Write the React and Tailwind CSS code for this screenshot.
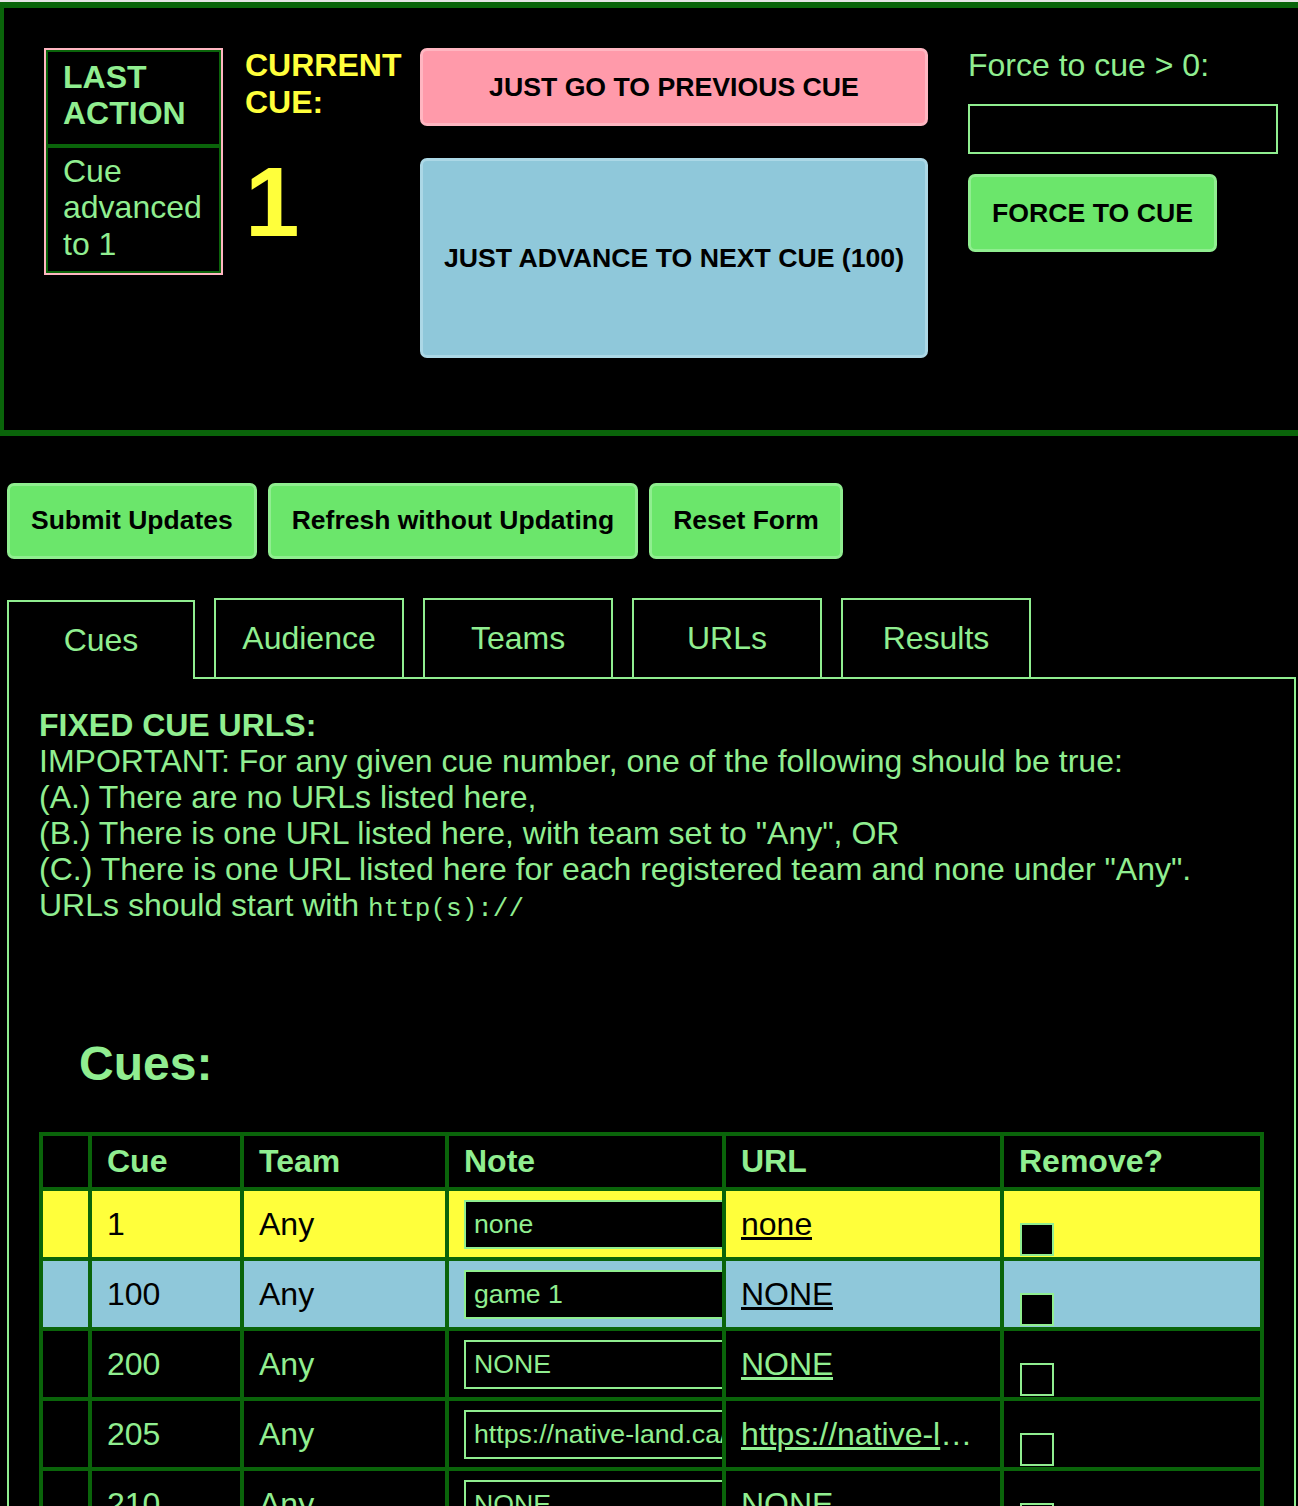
import React from "react";
import clsx from "clsx";

const tabs = ["Cues", "Audience", "Teams", "URLs", "Results"];

const cues = [
  { id: 1, cue: "1", team: "Any", note: "none", url: "none", tone: "current" },
  { id: 2, cue: "100", team: "Any", note: "game 1", url: "NONE", tone: "next" },
  { id: 3, cue: "200", team: "Any", note: "NONE", url: "NONE" },
  { id: 4, cue: "205", team: "Any", note: "https://native-land.ca/", url: "https://native-land.ca/" },
  { id: 5, cue: "210", team: "Any", note: "NONE", url: "NONE" },
  { id: 6, cue: "220", team: "Any", note: "NONE", url: "NONE" },
];

const rules = [
  "IMPORTANT: For any given cue number, one of the following should be true:",
  "(A.) There are no URLs listed here,",
  '(B.) There is one URL listed here, with team set to "Any", OR',
  '(C.) There is one URL listed here for each registered team and none under "Any".',
];

const cell = "border-r-4 border-b-4 border-[#0a640a]";

function GreenButton({ children, className }) {
  return (
    <button
      className={clsx(
        "h-[76px] px-[21px] rounded-[7px] border-[3px] border-[#90ee90] bg-[#6be66b] font-bold text-[26.5px] text-black whitespace-nowrap",
        className
      )}
    >
      {children}
    </button>
  );
}

function ControlPanel() {
  return (
    <div className="-ml-[2px] h-[434px] border-[6px] border-r-0 border-[#0a640a] flex pt-[40px] pl-[40px]">
      {/* Last action */}
      <div className="w-[179px] self-start border-2 border-[#ffb6c1] text-[32px] leading-[1.15] text-[#90ee90]">
        <div className="border-2 border-[#0a640a] pt-[6.5px] pb-[12px] px-[15px] font-bold">LAST ACTION</div>
        <div className="border-2 border-[#0a640a] pt-[4.5px] pb-[8px] px-[15px]">Cue advanced to 1</div>
      </div>

      {/* Current cue */}
      <div className="w-[175px] ml-[22px] -mt-[1px] text-[#ffff3b] font-bold">
        <div className="text-[32px] leading-[1.15]">CURRENT CUE:</div>
        <div className="text-[98px] leading-none mt-[32px]">1</div>
      </div>

      {/* Cue buttons */}
      <div className="w-[508px] flex flex-col">
        <button className="h-[78px] rounded-[7px] border-[3px] border-[#ffb6c1] bg-[#ff9aaa] font-bold text-[26.67px] text-black">
          JUST GO TO PREVIOUS CUE
        </button>
        <button className="h-[200px] mt-[32px] rounded-[7px] border-[3px] border-[#acd8e6] bg-[#8fc8da] font-bold text-[26.67px] text-black">
          JUST ADVANCE TO NEXT CUE (100)
        </button>
      </div>

      {/* Force */}
      <div className="ml-[40px] flex flex-col items-start">
        <div className="-mt-[1px] text-[32px] leading-[1.15] text-[#90ee90]">Force to cue &gt; 0:</div>
        <input className="mt-[20px] w-[310px] h-[50px] border-2 border-[#90ee90] bg-black" />
        <GreenButton className="h-[78px] mt-[20px] text-[26.67px]">FORCE TO CUE</GreenButton>
      </div>
    </div>
  );
}

function CueTable() {
  return (
    <div className="mt-[41px] w-[1225px] grid grid-cols-[49px_152px_205px_277px_278px_260px] border-l-4 border-t-4 border-[#0a640a] text-[32px] leading-[1.15]">
      {["", "Cue", "Team", "Note", "URL", "Remove?"].map((h, i) => (
        <div key={i} className={clsx(cell, "h-[55px] flex items-center pl-[15px] font-bold text-[#90ee90]")}>
          {h}
        </div>
      ))}
      {cues.map((row) => {
        const bg =
          row.tone === "current" ? "bg-[#ffff3b] text-black" :
          row.tone === "next" ? "bg-[#8fc8da] text-black" : "bg-black text-[#90ee90]";
        return (
          <React.Fragment key={row.id}>
            <div className={clsx(cell, bg, "h-[70px]")} />
            <div className={clsx(cell, bg, "h-[70px] flex items-center pl-[15px]")}>{row.cue}</div>
            <div className={clsx(cell, bg, "h-[70px] flex items-center pl-[15px]")}>{row.team}</div>
            <div className={clsx(cell, bg, "h-[70px] flex items-center pl-[15px] overflow-hidden")}>
              <input
                defaultValue={row.note}
                className="w-[320px] shrink-0 h-[49px] border-2 border-[#90ee90] bg-black px-[8px] text-[26.67px] text-[#90ee90]"
              />
            </div>
            <div className={clsx(cell, bg, "h-[70px] flex items-center pl-[15px] pr-[20px]")}>
              <a href="#" className="block min-w-0 truncate underline">{row.url}</a>
            </div>
            <div className={clsx(cell, bg, "h-[70px] flex items-end pl-[16px]")}>
              <div className="w-[34px] h-[33px] mb-[1px] border-2 border-[#90ee90] bg-black" />
            </div>
          </React.Fragment>
        );
      })}
    </div>
  );
}

export default function App() {
  return (
    <div className="h-[1506px] overflow-hidden bg-black font-['Liberation_Sans',Arial,sans-serif]">
      <div className="h-[2px] bg-[#e5e5e5]" />
      <ControlPanel />

      {/* Form actions */}
      <div className="flex gap-[11px] ml-[7px] mt-[47px]">
        <GreenButton>Submit Updates</GreenButton>
        <GreenButton>Refresh without Updating</GreenButton>
        <GreenButton>Reset Form</GreenButton>
      </div>

      {/* Tabs */}
      <div className="relative z-10 flex items-end gap-[19px] ml-[7px] mt-[39px] -mb-[2px]">
        {tabs.map((t, i) => (
          <div
            key={t}
            className={clsx(
              "flex items-center justify-center border-2 border-[#90ee90] text-[32px] leading-[1.15] text-[#90ee90] bg-black",
              i === 0 ? "w-[188px] h-[79px] border-b-0" : "w-[190px] h-[81px]"
            )}
          >
            {t}
          </div>
        ))}
      </div>

      <div className="ml-[7px] w-[1289px] min-h-[900px] border-2 border-[#90ee90] pl-[30px] pt-[28px]">
        <div className="text-[32px] leading-[36px] text-[#90ee90]">
          <div className="font-bold">FIXED CUE URLS:</div>
          {rules.map((r) => (
            <div key={r}>{r}</div>
          ))}
          <div>
            URLs should start with <code className="font-['Liberation_Mono',monospace] text-[26px]">http(s)://</code>
          </div>
        </div>

        <h2 className="ml-[40px] mt-[109px] text-[48px] leading-[55px] font-bold text-[#90ee90]">Cues:</h2>

        <CueTable />
      </div>
    </div>
  );
}
